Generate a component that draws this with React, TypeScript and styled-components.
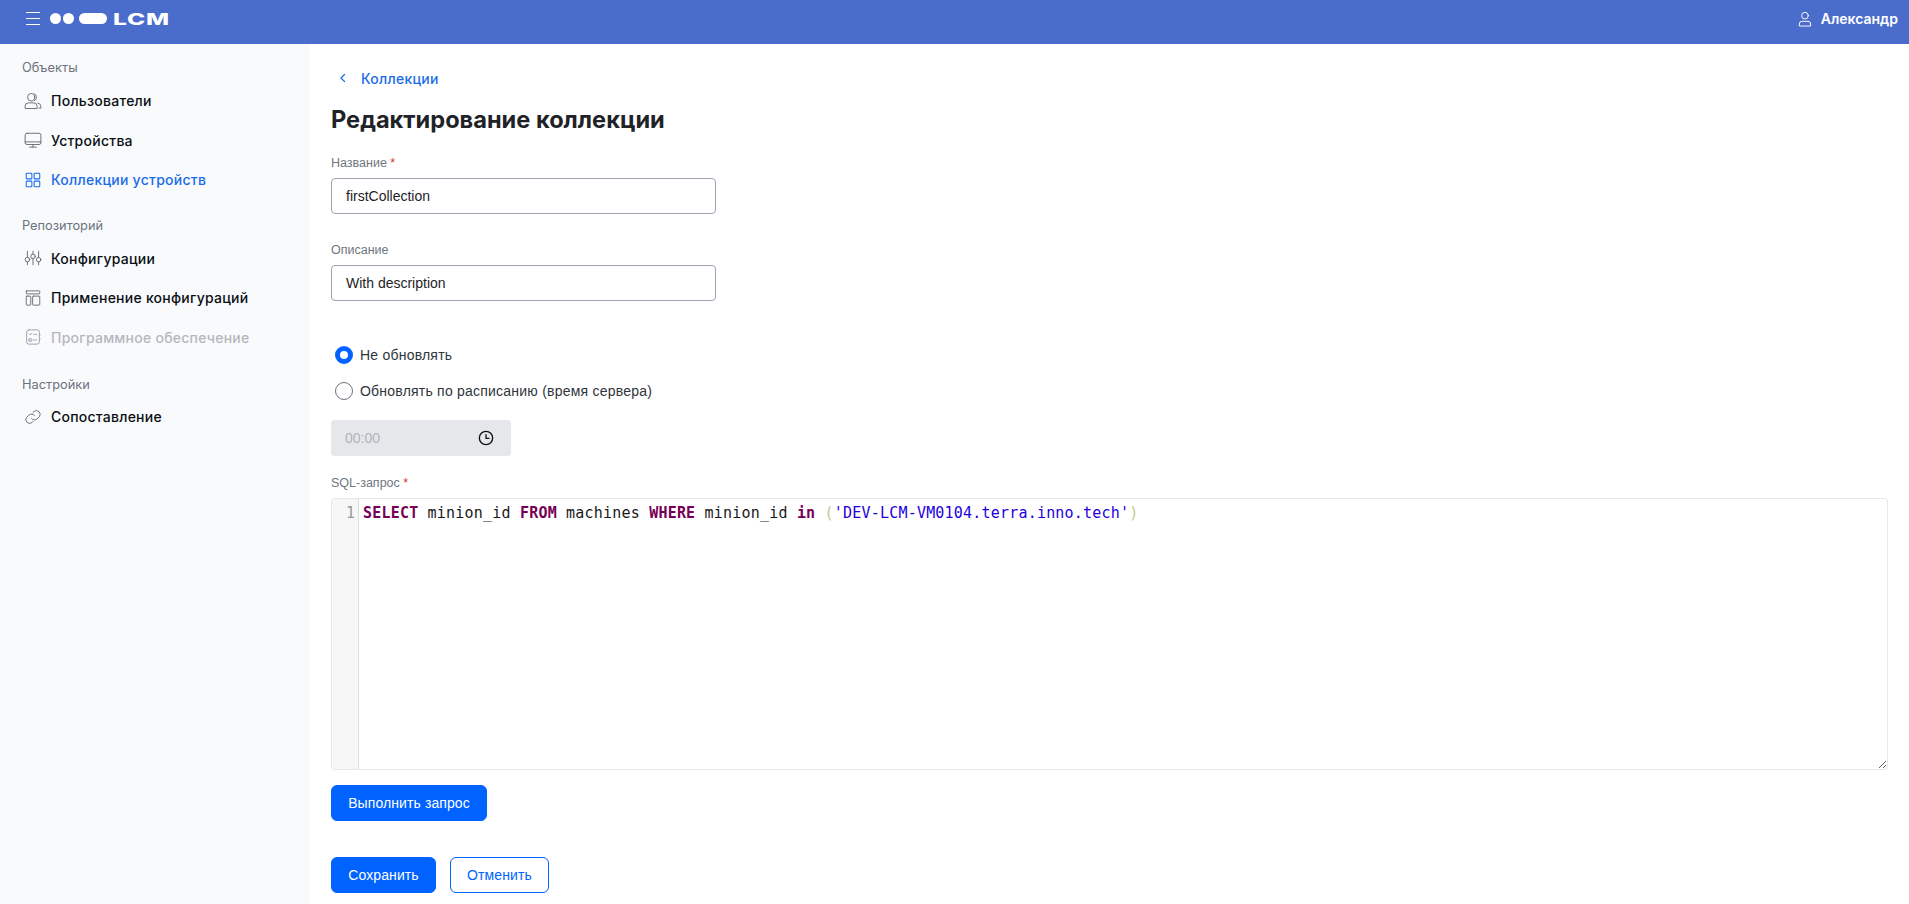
import React from "react";
import styled, { createGlobalStyle } from "styled-components";

const Global = createGlobalStyle`
  html, body { margin: 0; padding: 0; background: #fff; }
  * { box-sizing: border-box; }
`;

const Page = styled.div`
  display: flex;
  flex-direction: column;
  height: 904px;
  overflow: hidden;
  font-family: "Liberation Sans", Arial, sans-serif;
`;

const Header = styled.header`
  flex: none;
  height: 44px;
  background: #4a6dcb;
  color: #fff;
  display: flex;
  align-items: center;
  padding: 0 11px 7px 26px;
`;

const Burger = styled.span`
  display: flex;
  flex-direction: column;
  gap: 5px;
  width: 14px;
  margin-right: 10px;
  & > i { display: block; height: 1px; background: #fff; }
`;

const Logo = styled.div`
  display: flex;
  align-items: center;
  gap: 2px;
`;

const Dot = styled.span`
  width: 11px;
  height: 11px;
  border-radius: 50%;
  background: #fff;
`;

const Pill = styled.span`
  width: 28px;
  height: 11px;
  border-radius: 5.5px;
  background: #fff;
  margin-left: 3px;
`;

const LogoText = styled.span`
  display: inline-block;
  width: 55px;
  margin-left: 4px;
  font-family: Inter, sans-serif;
  font-weight: 800;
  font-size: 16px;
  line-height: 12px;
  letter-spacing: 0.5px;
  transform: scaleX(1.53);
  transform-origin: left center;
`;

const UserBox = styled.div`
  margin-left: auto;
  display: flex;
  align-items: center;
  gap: 8px;
  font-family: Inter, sans-serif;
  font-weight: 600;
  font-size: 14px;
`;

const Body = styled.div`
  flex: 1;
  display: flex;
  min-height: 0;
`;

const Sidebar = styled.aside`
  flex: none;
  width: 310px;
  background: #f8fafc;
  padding-top: 16px;
  font-family: Inter, sans-serif;
`;

const Group = styled.div<{ $gap: number }>`
  margin-bottom: ${(p) => p.$gap}px;
`;

const GroupTitle = styled.div<{ $close?: boolean }>`
  height: 16px;
  line-height: 16px;
  margin-left: 22px;
  margin-bottom: ${(p) => (p.$close ? 4 : 5)}px;
  font-size: 12.8px;
  color: #6b7280;
`;

const Item = styled.div<{ $tone?: "active" | "disabled" }>`
  display: flex;
  align-items: center;
  height: 39.5px;
  padding-left: 24px;
  gap: 9px;
  font-size: 14px;
  font-weight: 450;
  letter-spacing: 0.25px;
  color: ${(p) => (p.$tone === "active" ? "#1a6ce8" : p.$tone === "disabled" ? "#b4b7bc" : "#0b0f14")};
  & > svg {
    flex: none;
    color: ${(p) => (p.$tone === "active" ? "#1a6ce8" : p.$tone === "disabled" ? "#9ca3af" : "#5f6670")};
  }
`;

const Main = styled.main`
  flex: 1;
  min-width: 0;
  padding: 24px 21px 0 21px;
`;

const Back = styled.div`
  display: flex;
  align-items: center;
  height: 20px;
  padding-left: 6px;
  gap: 12px;
  color: #1a6ce8;
  font-family: Inter, sans-serif;
  font-size: 14px;
  font-weight: 450;
  letter-spacing: 0.25px;
`;

const Title = styled.h1`
  margin: 14px 0 17px;
  height: 36px;
  line-height: 36px;
  font-family: Inter, sans-serif;
  font-size: 23.6px;
  font-weight: 700;
  color: #1f2328;
`;

const Field = styled.div`
  width: 385px;
  margin-bottom: 28px;
`;

const Label = styled.div`
  height: 16px;
  line-height: 16px;
  margin-bottom: 7px;
  font-size: 12.5px;
  color: #6f7680;
  & > b { color: #e0322b; font-weight: 400; }
`;

const TextInput = styled.div`
  height: 36px;
  line-height: 34px;
  padding: 0 14px;
  border: 1px solid #9ca3af;
  border-radius: 4px;
  font-size: 14px;
  color: #1f2328;
`;

const RadioRow = styled.div`
  display: flex;
  align-items: center;
  height: 18px;
  margin-bottom: 18px;
  padding-left: 4px;
  gap: 7px;
  font-size: 14px;
  letter-spacing: 0.22px;
  color: #30353b;
`;

const RadioMark = styled.span<{ $on?: boolean }>`
  width: 18px;
  height: 18px;
  border-radius: 50%;
  background: #fff;
  border: ${(p) => (p.$on ? "5px solid #0063ff" : "1px solid #6b7280")};
`;

const Radios = styled.div`
  margin-top: 45px;
`;

const TimeBox = styled.div`
  display: flex;
  align-items: center;
  justify-content: space-between;
  width: 180px;
  height: 36px;
  margin-top: 20px;
  margin-bottom: 19px;
  padding: 0 17px 0 14px;
  border-radius: 4px;
  background: #e5e7eb;
  font-size: 14px;
  color: #b0b4ba;
  & > svg { color: #111; }
`;

const Editor = styled.div`
  display: flex;
  height: 272px;
  width: 100%;
  resize: vertical;
  overflow: hidden;
  border: 1px solid #e5e7eb;
  border-radius: 4px;
  font-family: "DejaVu Sans Mono", "Liberation Mono", monospace;
  font-size: 15px;
  line-height: 22px;
`;

const Gutter = styled.div`
  flex: none;
  width: 27px;
  padding: 3px 3px 0 0;
  text-align: right;
  background: #f7f7f7;
  border-right: 1px solid #ddd;
  color: #999;
`;

const Code = styled.div`
  padding: 3px 0 0 4px;
  white-space: pre;
  color: #1a1a1a;
  letter-spacing: 0.2px;
`;

const Kw = styled.span`
  color: #770055;
  font-weight: 700;
`;

const Str = styled.span`
  color: #2200dd;
`;

const Bracket = styled.span`
  color: #c9c48f;
`;

const Button = styled.button<{ $outline?: boolean; $w: number }>`
  display: block;
  width: ${(p) => p.$w}px;
  height: 36px;
  padding: 0;
  border-radius: 6px;
  border: 1px solid #0063ff;
  background: ${(p) => (p.$outline ? "#fff" : "#0063ff")};
  color: ${(p) => (p.$outline ? "#0063ff" : "#fff")};
  font-family: "Liberation Sans", Arial, sans-serif;
  font-size: 14px;
  letter-spacing: 0.1px;
`;

const RunRow = styled.div`
  margin-top: 15px;
`;

const Actions = styled.div`
  display: flex;
  gap: 14px;
  margin-top: 36px;
`;

type IconProps = { children: React.ReactNode; size?: number; sw?: number };
const Ico = ({ children, size = 18, sw = 1.2 }: IconProps) => (
  <svg width={size} height={size} viewBox="0 0 24 24" fill="none" stroke="currentColor" strokeWidth={sw} strokeLinecap="round" strokeLinejoin="round">
    {children}
  </svg>
);

const UsersIcon = () => (
  <Ico>
    <ellipse cx="9.5" cy="7" rx="4.7" ry="5" />
    <path d="M13.5 2.2a4.8 4.8 0 0 1 3 4.8 4.8 4.8 0 0 1-3 4.8" />
    <path d="M1.5 21.5v-2.5a4.5 4.5 0 0 1 4.5-4.5h7a4.5 4.5 0 0 1 4.5 4.5v2.5z" />
    <path d="M18.5 14.8a4.6 4.6 0 0 1 4 4.3v2.4h-2.5" />
  </Ico>
);
const MonitorIcon = () => (
  <Ico>
    <rect x="1.5" y="3" width="21" height="15" rx="2.5" />
    <path d="M1.5 14.5h21M12 18v3.5M7.5 21.5h9" />
  </Ico>
);
const GridIcon = () => (
  <Ico sw={1.4}>
    <rect x="3" y="3" width="7.5" height="7.5" rx="1" />
    <rect x="13.5" y="3" width="7.5" height="7.5" rx="1" />
    <rect x="3" y="13.5" width="7.5" height="7.5" rx="1" />
    <rect x="13.5" y="13.5" width="7.5" height="7.5" rx="1" />
  </Ico>
);
const SlidersIcon = () => (
  <Ico>
    <path d="M4.5 3v8M4.5 17.5V21M12 3v3.5M12 13v8M19.5 3v8M19.5 17.5V21" />
    <circle cx="4.5" cy="14.2" r="3" />
    <circle cx="12" cy="9.8" r="3" />
    <circle cx="19.5" cy="14.2" r="3" />
  </Ico>
);
const PanelIcon = () => (
  <Ico sw={1.2}>
    <rect x="3" y="2.5" width="18" height="4" rx="0.6" />
    <rect x="3" y="9.5" width="6" height="12" rx="1" />
    <rect x="11.5" y="9.5" width="9.5" height="12" rx="1" />
  </Ico>
);
const SoftIcon = () => (
  <Ico sw={1.3}>
    <rect x="3.5" y="2.5" width="17" height="19" rx="3" />
    <path d="M7 8l1.3 1.3L10.5 7M13 8.5h4M7 14.5h3.5v3H7zM13 16h4M20.5 9.5h1M20.5 14.5h1" />
  </Ico>
);
const LinkIcon = () => (
  <Ico>
    <path d="M10 14a5 5 0 0 0 7.5.5l3-3a5 5 0 0 0-7-7l-1.7 1.7" />
    <path d="M14 10a5 5 0 0 0-7.5-.5l-3 3a5 5 0 0 0 7 7l1.7-1.7" />
  </Ico>
);
const ClockIcon = () => (
  <Ico size={16} sw={2}>
    <circle cx="12" cy="12" r="10" />
    <path d="M12 7v5.5h4.5" />
  </Ico>
);
const UserIcon = () => (
  <Ico size={16} sw={1.4}>
    <circle cx="12" cy="7" r="5" />
    <path d="M3.5 22v-2.5a4 4 0 0 1 4-4h9a4 4 0 0 1 4 4V22z" />
  </Ico>
);
const ChevronIcon = () => (
  <Ico size={12} sw={2.4}>
    <path d="M15 5l-7 7 7 7" />
  </Ico>
);

export default function App() {
  return (
    <Page>
      <Global />
      <Header>
        <Burger>
          <i />
          <i />
          <i />
        </Burger>
        <Logo>
          <Dot />
          <Dot />
          <Pill />
          <LogoText>LCM</LogoText>
        </Logo>
        <UserBox>
          <UserIcon />
          Александр
        </UserBox>
      </Header>
      <Body>
        <Sidebar>
          <Group $gap={18}>
            <GroupTitle>Объекты</GroupTitle>
            <Item><UsersIcon />Пользователи</Item>
            <Item><MonitorIcon />Устройства</Item>
            <Item $tone="active"><GridIcon />Коллекции устройств</Item>
          </Group>
          <Group $gap={20}>
            <GroupTitle>Репозиторий</GroupTitle>
            <Item><SlidersIcon />Конфигурации</Item>
            <Item><PanelIcon />Применение конфигураций</Item>
            <Item $tone="disabled"><SoftIcon />Программное обеспечение</Item>
          </Group>
          <Group $gap={0}>
            <GroupTitle $close>Настройки</GroupTitle>
            <Item><LinkIcon />Сопоставление</Item>
          </Group>
        </Sidebar>
        <Main>
          <Back><ChevronIcon />Коллекции</Back>
          <Title>Редактирование коллекции</Title>
          <Field>
            <Label>Название <b>*</b></Label>
            <TextInput>firstCollection</TextInput>
          </Field>
          <Field>
            <Label>Описание</Label>
            <TextInput>With description</TextInput>
          </Field>
          <Radios>
            <RadioRow><RadioMark $on />Не обновлять</RadioRow>
            <RadioRow><RadioMark />Обновлять по расписанию (время сервера)</RadioRow>
          </Radios>
          <TimeBox>00:00<ClockIcon /></TimeBox>
          <Label>SQL-запрос <b>*</b></Label>
          <Editor>
            <Gutter>1</Gutter>
            <Code>
              <Kw>SELECT</Kw> minion_id <Kw>FROM</Kw> machines <Kw>WHERE</Kw> minion_id <Kw>in</Kw> <Bracket>(</Bracket><Str>'DEV-LCM-VM0104.terra.inno.tech'</Str><Bracket>)</Bracket>
            </Code>
          </Editor>
          <RunRow>
            <Button $w={156}>Выполнить запрос</Button>
          </RunRow>
          <Actions>
            <Button $w={105}>Сохранить</Button>
            <Button $w={99} $outline>Отменить</Button>
          </Actions>
        </Main>
      </Body>
    </Page>
  );
}
